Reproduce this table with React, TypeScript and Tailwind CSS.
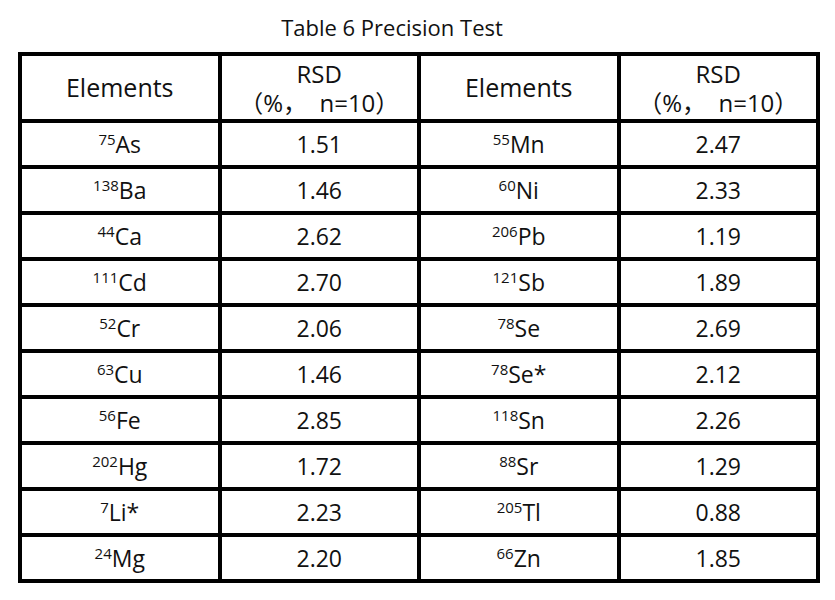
import React from "react";

type Row = { m1: string; e1: string; v1: string; m2: string; e2: string; v2: string };

const rows: Row[] = [
  { m1: "75", e1: "As", v1: "1.51", m2: "55", e2: "Mn", v2: "2.47" },
  { m1: "138", e1: "Ba", v1: "1.46", m2: "60", e2: "Ni", v2: "2.33" },
  { m1: "44", e1: "Ca", v1: "2.62", m2: "206", e2: "Pb", v2: "1.19" },
  { m1: "111", e1: "Cd", v1: "2.70", m2: "121", e2: "Sb", v2: "1.89" },
  { m1: "52", e1: "Cr", v1: "2.06", m2: "78", e2: "Se", v2: "2.69" },
  { m1: "63", e1: "Cu", v1: "1.46", m2: "78", e2: "Se*", v2: "2.12" },
  { m1: "56", e1: "Fe", v1: "2.85", m2: "118", e2: "Sn", v2: "2.26" },
  { m1: "202", e1: "Hg", v1: "1.72", m2: "88", e2: "Sr", v2: "1.29" },
  { m1: "7", e1: "Li*", v1: "2.23", m2: "205", e2: "Tl", v2: "0.88" },
  { m1: "24", e1: "Mg", v1: "2.20", m2: "66", e2: "Zn", v2: "1.85" },
];

function Cell({ children }: { children: React.ReactNode }) {
  return (
    <div className="flex items-center justify-center bg-white text-[23px] leading-[29px] text-[#111]">
      {children}
    </div>
  );
}

function Isotope({ mass, el }: { mass: string; el: string }) {
  return (
    <span>
      <sup className="text-[15px]">{mass}</sup>
      {el}
    </span>
  );
}

function HeaderCells() {
  return (
    <>
      <Cell>
        <span className="text-[25px]">Elements</span>
      </Cell>
      <Cell>
        <div className="flex flex-col items-center text-[24px] leading-[29px]">
          <span>RSD</span>
          <span className="whitespace-pre">{"（%，  n=10）"}</span>
        </div>
      </Cell>
    </>
  );
}

export default function App() {
  return (
    <div
      className="min-h-[600px] w-[835px] bg-white pl-[18px]"
      style={{ fontFamily: '"Open Sans", "Noto Sans CJK SC", sans-serif' }}
    >
      <div className="w-[802px] pr-[54px] pt-[12px] text-center text-[22px] leading-[30px] text-[#111]">
        Table 6 Precision Test
      </div>

      <div className="mt-[10px] grid w-[802px] grid-cols-4 grid-rows-[63px_repeat(10,42px)] gap-[4px] bg-black p-[4px]">
        <HeaderCells />
        <HeaderCells />
        {rows.map((r) => (
          <React.Fragment key={r.m1 + r.e1}>
            <Cell>
              <Isotope mass={r.m1} el={r.e1} />
            </Cell>
            <Cell>{r.v1}</Cell>
            <Cell>
              <Isotope mass={r.m2} el={r.e2} />
            </Cell>
            <Cell>{r.v2}</Cell>
          </React.Fragment>
        ))}
      </div>
    </div>
  );
}
